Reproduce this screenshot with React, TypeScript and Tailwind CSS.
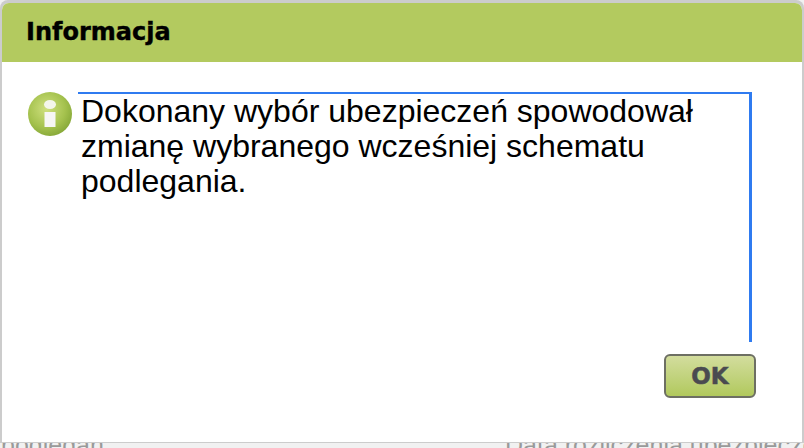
export default function App() {
  return (
    <div className="w-[804px] h-[448px] overflow-hidden bg-[#f1f1f1] flex flex-col" style={{ fontFamily: '"Liberation Sans", sans-serif' }}>
      <div className="h-[443px] shrink-0 bg-[#cccccc] pt-[3px] pl-[2px] pr-[2px] pb-[1px] rounded-t-[8px]">
        <div className="h-full bg-white flex flex-col rounded-t-[7px] overflow-hidden">
          <div className="h-[59px] shrink-0 bg-[#b3ca5f] flex items-center pl-[24px] pb-[1px]">
            <span className="text-[24px] font-bold text-black leading-none [-webkit-text-stroke:0.4px_black]" style={{ fontFamily: '"DejaVu Sans", sans-serif' }}>Informacja</span>
          </div>
          <div className="flex-1 flex flex-col pl-[26px] pr-[48px] pt-[30px]">
            <div className="flex items-start">
              <svg className="w-[44px] h-[44px] shrink-0" viewBox="0 0 44 44">
                <defs>
                  <radialGradient id="g" cx="0.42" cy="0.38" r="0.65">
                    <stop offset="0" stopColor="#cfe07f" />
                    <stop offset="0.65" stopColor="#a5c24e" />
                    <stop offset="1" stopColor="#86a838" />
                  </radialGradient>
                </defs>
                <circle cx="22" cy="22" r="22" fill="url(#g)" />
                <ellipse cx="22" cy="12.5" rx="6" ry="4.5" fill="#f4f6ea" />
                <path d="M16.5 20h11v15h-11z" fill="#f6f6f4" />
              </svg>
              <div className="ml-[6px] w-[674px] h-[250px] border-t-[2px] border-r-[3px] border-[#2f7bf0] text-[32px] leading-[35px] text-black pl-[3px] pr-[40px] pt-0">
                Dokonany wybór ubezpieczeń spowodował zmianę wybranego wcześniej schematu podlegania.
              </div>
            </div>
            <div className="flex justify-end mt-[12px] -mr-[2px]">
              <button className="w-[92px] h-[44px] rounded-[6px] border-[2px] border-[#6d6f63] bg-gradient-to-b from-[#d3dd9d] to-[#b1c95c] text-[#4a4a50] text-[23px] font-bold leading-none [-webkit-text-stroke:0.5px_#4a4a50]" style={{ fontFamily: '"DejaVu Sans", sans-serif' }}>OK</button>
            </div>
          </div>
        </div>
      </div>
      <div className="h-[5px] relative overflow-hidden text-[#9a9a9a] text-[25px]">
        <span className="absolute left-[1px] -top-[10px] leading-[24px] whitespace-nowrap">podlegan</span>
        <span className="absolute left-[505px] -top-[10px] leading-[24px] whitespace-nowrap">Data rozliczenia ubezpieczenia</span>
      </div>
    </div>
  );
}
